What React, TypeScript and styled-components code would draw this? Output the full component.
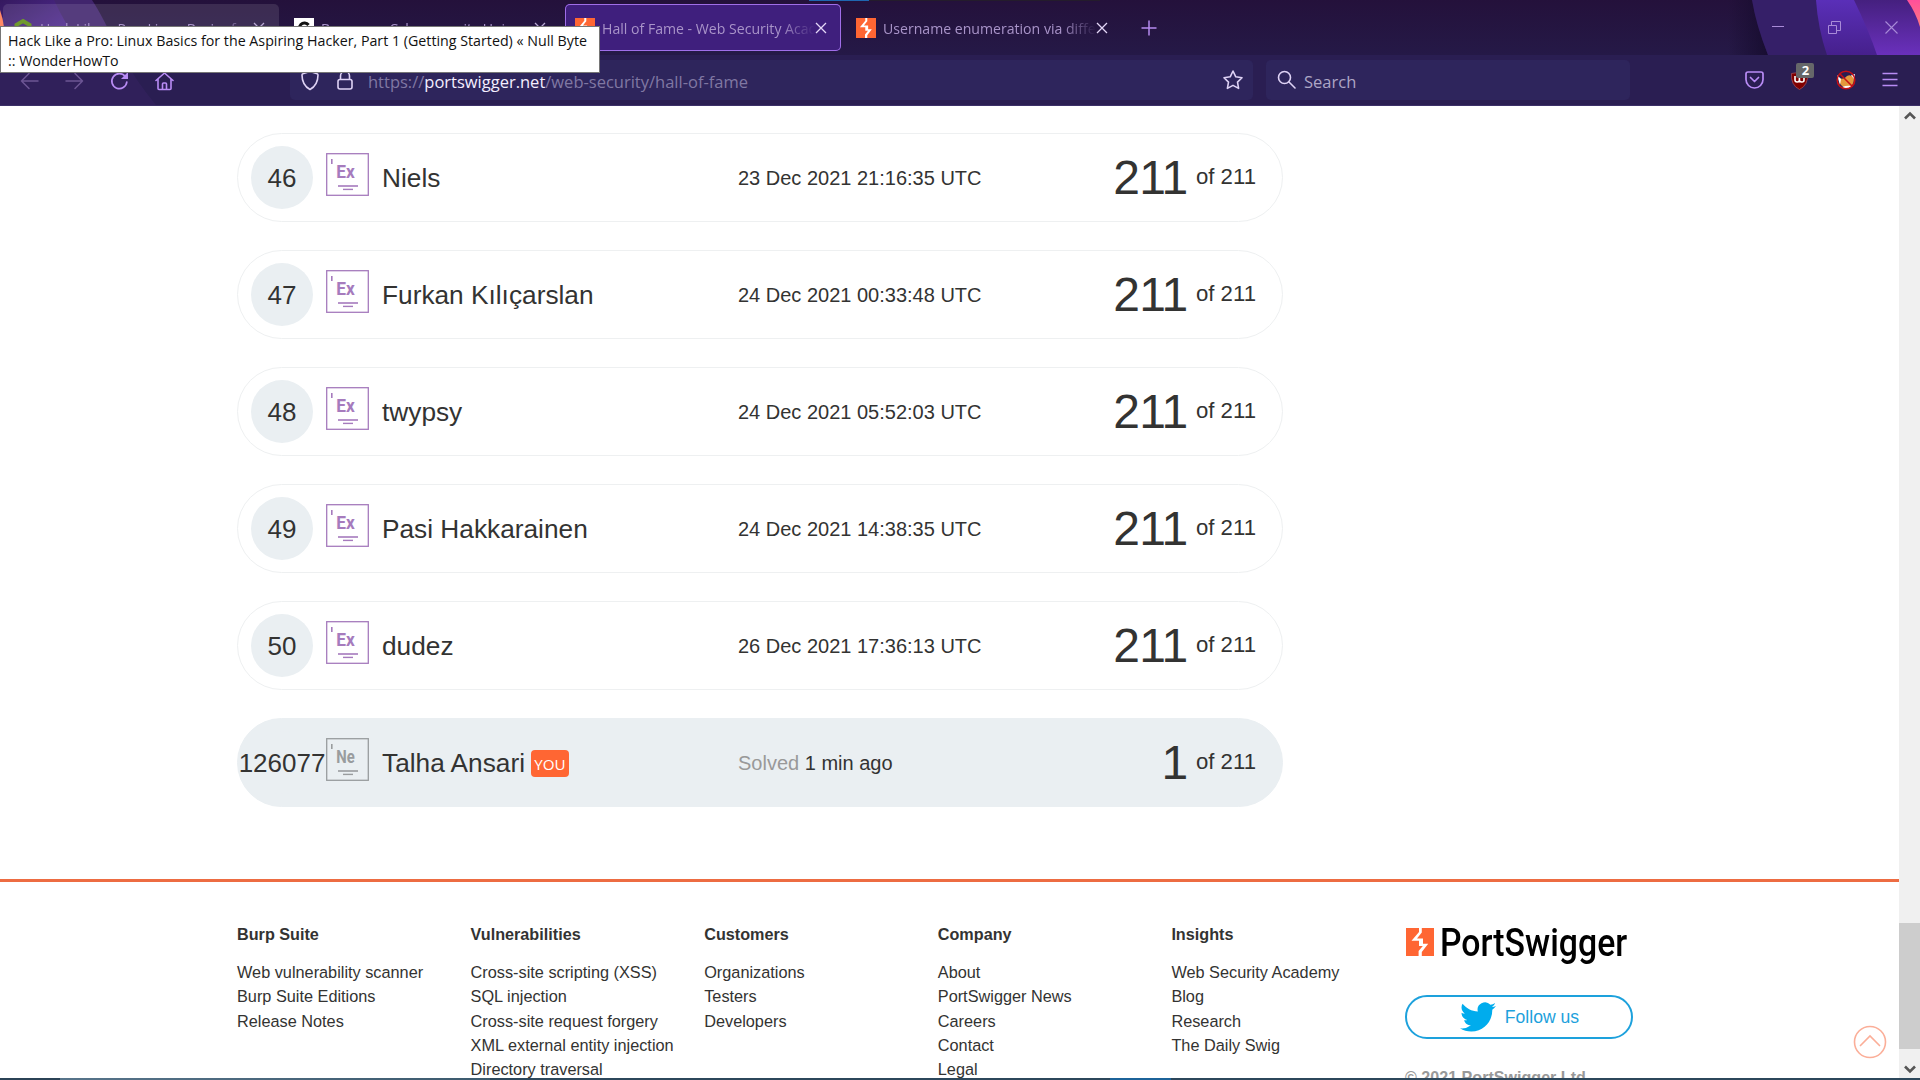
import React from 'react';
import styled, { createGlobalStyle, css } from 'styled-components';

const UI = '"Open Sans", "Noto Sans", sans-serif';
const BODY = '"Liberation Sans", Arial, sans-serif';

const Global = createGlobalStyle`
  * { box-sizing: border-box; }
  body { margin: 0; background: #fff; overflow: hidden; }
`;

const Screen = styled.div`
  position: relative;
  width: 1920px;
  height: 1080px;
  overflow: hidden;
  display: flex;
  flex-direction: column;
  background: #fff;
  font-family: ${BODY};
  color: #333332;
  white-space: nowrap;
`;

/* ---------- Browser chrome ---------- */
const Chrome = styled.header`
  position: relative;
  height: 106px;
  flex: none;
  font-family: ${UI};
  background: linear-gradient(180deg, #24113b 0, #251947 55px, #2a1e52 55px, #2a1e52 105px, #3c3068 105px);
`;

const ThemeArt = styled.svg`
  position: absolute;
  inset: 0;
`;

const ProgressHint = styled.div`
  position: absolute;
  top: 0;
  left: 809px;
  width: 291px;
  height: 1px;
  background: linear-gradient(90deg, #1f66b0 60px, #241c2c 60px);
`;

const TabStrip = styled.div`
  position: relative;
  height: 55px;
  padding: 4px 22px 0 3px;
  display: flex;
  gap: 5px;
`;

const Tab = styled.div<{ $state?: 'hover' | 'active' }>`
  width: 276px;
  height: 47px;
  flex: none;
  display: flex;
  align-items: center;
  padding: 0 14px 0 10px;
  border-radius: 5px;
  color: #a994c9;
  ${(p) => p.$state === 'hover' && css`background: rgba(255, 255, 255, 0.11);`}
  ${(p) => p.$state === 'active' && css`
    background: #3f1f7d;
    box-shadow: inset 0 0 0 1px #a06ee8;
  `}
`;

const TabTitle = styled.span`
  width: 213px;
  margin-left: 7px;
  padding-top: 2px;
  overflow: hidden;
  font-size: 14.1px;
  line-height: 22px;
  mask-image: linear-gradient(90deg, #000 178px, transparent 213px);
`;

const TabClose = styled.svg`
  width: 12px;
  height: 12px;
  margin-left: auto;
  flex: none;
`;

const NewTab = styled.svg`
  width: 16px;
  height: 16px;
  margin: 16px 0 0 14px;
`;

const WindowButtons = styled.div`
  margin-left: auto;
  display: flex;
  height: 46px;
  align-items: center;
  gap: 44px;
`;

const NavBar = styled.div`
  position: relative;
  height: 51px;
  display: flex;
  align-items: center;
  padding: 0 22px 1px 20px;
`;

const NavButtons = styled.div`
  width: 270px;
  padding-top: 2px;
  display: flex;
  align-items: center;
  gap: 26px;
`;

const Field = styled.div<{ $width: number }>`
  width: ${(p) => p.$width}px;
  height: 40px;
  display: flex;
  align-items: center;
  border-radius: 5px;
  background: #2e255c;
  font-size: 16.5px;
`;

const Url = styled.span`
  margin-left: 15px;
  padding-top: 4px;
  line-height: 24px;
  color: #8078a3;
  b { font-weight: 400; color: #f4eeff; }
`;

const Placeholder = styled.span`
  margin-left: 8px;
  padding-top: 3px;
  color: #ada6c5;
`;

const Extensions = styled.div`
  margin-left: auto;
  display: flex;
  align-items: center;
  gap: 26.3px;
`;

const ExtensionSlot = styled.div`
  position: relative;
  display: flex;
`;

const Count = styled.span`
  position: absolute;
  left: 6px;
  top: -7px;
  width: 18px;
  height: 15px;
  border-radius: 2px;
  background: #666769;
  color: #fff;
  font: 700 13px/14px ${UI};
  text-align: center;
`;

const Tooltip = styled.div`
  position: absolute;
  left: 0;
  top: 26px;
  width: 600px;
  height: 47px;
  padding: 4px 7px;
  border: 1px solid #767676;
  background: #fff;
  color: #111;
  font: 14.24px/20px ${UI};
`;

/* ---------- Page ---------- */
const Viewport = styled.div`
  flex: 1;
  min-height: 0;
  display: flex;
`;

const Page = styled.div`
  position: relative;
  width: 1899px;
  overflow: hidden;
`;

const Ranking = styled.main`
  width: 1283px;
  padding: 27px 0 72px 237px;
  display: flex;
  flex-direction: column;
  gap: 28px;
`;

const Entry = styled.div<{ $own?: boolean }>`
  height: 89px;
  display: grid;
  grid-template-columns: 88px 56px 356px 1fr auto;
  align-items: center;
  padding-right: 26px;
  border: 1px solid ${(p) => (p.$own ? '#eaeff2' : '#eef0f1')};
  border-radius: 45px;
  background: ${(p) => (p.$own ? '#eaeff2' : '#fff')};
`;

const Position = styled.div`
  width: 62px;
  height: 63px;
  margin-left: 13px;
  padding-top: 1px;
  display: flex;
  justify-content: center;
  align-items: center;
  border-radius: 50%;
  background: #eaeff2;
  font-size: 26px;
`;

const LevelIcon = styled.svg`
  width: 43px;
  height: 43px;
  margin-bottom: 6px;
`;

const Player = styled.div`
  display: flex;
  align-items: center;
  padding-top: 1px;
  font-size: 26.25px;
`;

const YouTag = styled.span`
  width: 38px;
  height: 27px;
  margin-left: 6px;
  border-radius: 4px;
  background: #ff6633;
  color: #fff;
  font: 15.2px/28px ${UI};
  text-align: center;
`;

const Solved = styled.div`
  padding-top: 1px;
  font-size: 20px;
  span { color: #999; }
`;

const Score = styled.div`
  display: flex;
  align-items: center;
  padding-bottom: 1px;
  font-size: 22.2px;
  strong { font-size: 48px; font-weight: 400; letter-spacing: -0.8px; margin-right: 8.500px; }
`;

const Footer = styled.footer`
  height: 300px;
  padding: 40px 0 0 237px;
  border-top: 3px solid #ed6c42;
  display: grid;
  grid-template-columns: repeat(5, 233.6px) 228px;
`;

const Heading = styled.h3`
  margin: 0 0 14px;
  font-size: 16.2px;
  line-height: 24px;
`;

const LinkText = styled.a`
  display: block;
  font-size: 16.3px;
  line-height: 24.35px;
`;

const Brand = styled.div`
  display: flex;
  align-items: center;
  height: 40px;
  padding-left: 1px;
`;

const BrandName = styled.span`
  margin-left: 6px;
  padding-top: 1px;
  color: #000;
  font: 500 38px/40px Roboto, sans-serif;
  transform: scaleX(0.89);
  transform-origin: left;
`;

const Follow = styled.a`
  margin-top: 33px;
  width: 228px;
  height: 44px;
  display: flex;
  align-items: center;
  justify-content: center;
  gap: 9px;
  padding-left: 1px;
  border: 2px solid #1da1dc;
  border-radius: 22px;
  color: #1da1dc;
  font-size: 17.6px;
`;

const Copyright = styled.p`
  margin: 26px 0 0;
  color: #999;
  font: 700 16.1px/24px ${BODY};
`;

const BackToTop = styled.svg`
  position: absolute;
  right: 12px;
  bottom: 19px;
`;

const Scrollbar = styled.div`
  width: 21px;
  display: flex;
  flex-direction: column;
  align-items: center;
  background: #f0f0f0;
`;

const Thumb = styled.div`
  width: 21px;
  height: 126px;
  margin-top: auto;
  background: #cdcdcd;
`;

const ScrollArrow = styled.svg<{ $down?: boolean }>`
  width: 12px;
  height: 9px;
  flex: none;
  margin: ${(p) => (p.$down ? '16px 0 4px' : '5px 0')};
`;

const Taskbar = styled.div`
  height: 2px;
  flex: none;
  background: linear-gradient(90deg, #2b4356 60px, #57748a 60px, #3c5a6e 490px, #2c475b 490px, #2c475b 1110px, #1c6399 1110px, #1c6399 1171px, #2c475b 1171px);
`;

/* ---------- Icons ---------- */
const SwigMark = styled.svg<{ $size: number }>`
  width: ${(p) => p.$size}px;
  height: ${(p) => p.$size}px;
  flex: none;
`;

const Swig = ({ size }: { size: number }) => (
  <SwigMark $size={size} viewBox="0 0 28 28">
    <path fill="#ff6633" d="M0 0h28v28H0z" />
    <path fill="#fff" d="M13 0h2.800v4.500L11 10.500h6v5.300h5.200L15.800 24v4H12.600v-5l4.200-5H13v-5.200H5.500L13 4z" />
  </SwigMark>
);

const Close = ({ color = '#e4d8f7' }) => (
  <TabClose viewBox="0 0 12 12" stroke={color} strokeWidth="1.3"><path d="M1 1l10 10M11 1L1 11" /></TabClose>
);

const Level = ({ code, color }: { code: string; color: string }) => (
  <LevelIcon viewBox="0 0 43 43" fill={color}>
    <rect x=".7" y=".7" width="41.600" height="41.600" fill="none" stroke={color} strokeWidth="1.3" />
    <rect x="5" y="6" width="1.600" height="5" />
    <text x="10.300" y="25" fontFamily="Roboto, sans-serif" fontWeight="700" fontSize="17.800" textLength="18.500" lengthAdjust="spacingAndGlyphs">{code}</text>
    <rect x="12" y="32.200" width="20" height="1.600" />
    <rect x="17" y="35.700" width="10" height="1.400" />
  </LevelIcon>
);

const Art = () => (
  <ThemeArt width="1920" height="105" viewBox="0 0 1920 105">
    <defs>
      <linearGradient id="shade"><stop offset="0" stopColor="#150b2c" stopOpacity="0" /><stop offset="1" stopColor="#150b2c" stopOpacity=".8" /></linearGradient>
      <linearGradient id="mid" x2="0" y2="1"><stop offset="0" stopColor="#5a2fb8" /><stop offset="1" stopColor="#46208c" /></linearGradient>
      <linearGradient id="right" x2="0" y2="1"><stop offset="0" stopColor="#45207f" /><stop offset="1" stopColor="#6a30bc" /></linearGradient>
      <linearGradient id="pink" x2="0" y2="1"><stop offset="0" stopColor="#ff4f9a" /><stop offset="1" stopColor="#ff7a80" /></linearGradient>
      <linearGradient id="left" x1="0" y1="0" x2="1" y2="1"><stop offset="0" stopColor="#35195f" /><stop offset="1" stopColor="#5f35ad" /></linearGradient>
    </defs>
    <path fill="#41256d" d="M50 0h42q12 18 28 55H60z" />
    <path fill="url(#left)" d="M0 0h54q12 26 32 55H0z" />
    <path fill="#ff8a66" d="M0 10q3 8 4 18H0z" />
    <path fill="#3b2569" opacity=".35" d="M0 55h122q14 26 34 50H0z" />
    <path fill="url(#shade)" d="M1728 0h24q6 28 16 55h-40z" />
    <path fill="#351f68" d="M1752 0h168v55h-152q-12-30-16-55z" />
    <path fill="url(#mid)" d="M1816 0h104v55h-93q-9-26-11-55z" />
    <path fill="url(#right)" d="M1854 0h66v55h-43q-8-24-23-55z" />
    <path fill="url(#pink)" d="M1907 0h13v27q-4-14-13-27z" />
  </ThemeArt>
);

const people: [string, string, string][] = [
  ['46', 'Niels', '23 Dec 2021 21:16:35 UTC'],
  ['47', 'Furkan Kılıçarslan', '24 Dec 2021 00:33:48 UTC'],
  ['48', 'twypsy', '24 Dec 2021 05:52:03 UTC'],
  ['49', 'Pasi Hakkarainen', '24 Dec 2021 14:38:35 UTC'],
  ['50', 'dudez', '26 Dec 2021 17:36:13 UTC'],
];

const columns: [string, string[]][] = [
  ['Burp Suite', ['Web vulnerability scanner', 'Burp Suite Editions', 'Release Notes']],
  ['Vulnerabilities', ['Cross-site scripting (XSS)', 'SQL injection', 'Cross-site request forgery', 'XML external entity injection', 'Directory traversal']],
  ['Customers', ['Organizations', 'Testers', 'Developers']],
  ['Company', ['About', 'PortSwigger News', 'Careers', 'Contact', 'Legal']],
  ['Insights', ['Web Security Academy', 'Blog', 'Research', 'The Daily Swig']],
];

export default function App() {
  return (
    <Screen>
      <Global />
      <Chrome>
        <Art />
        <ProgressHint />
        <TabStrip>
          <Tab $state="hover">
            <svg width="20" height="20" viewBox="0 0 20 20" fill="none" stroke="#6f9a2d" strokeWidth="4"><path d="M10 3l6.500 3.800v6.400L10 17l-6.500-3.800V6.800z" /></svg>
            <TabTitle>Hack Like a Pro: Linux Basics for the</TabTitle>
            <Close color="#b9a9d3" />
          </Tab>
          <Tab>
            <svg width="20" height="20" viewBox="0 0 20 20"><path fill="#fff" d="M0 0h20v20H0z" /><path d="M14.500 7A5 5 0 1 0 15 12h-4" fill="none" stroke="#111" strokeWidth="3" /></svg>
            <TabTitle>Become a Cybersecurity Universe</TabTitle>
            <Close color="#b9a9d3" />
          </Tab>
          <Tab $state="active"><Swig size={20} /><TabTitle>Hall of Fame - Web Security Academy</TabTitle><Close /></Tab>
          <Tab><Swig size={20} /><TabTitle>Username enumeration via different</TabTitle><Close /></Tab>
          <NewTab viewBox="0 0 16 16" stroke="#b58af0" strokeWidth="1.5"><path d="M8 .5v15M.5 8h15" /></NewTab>
          <WindowButtons>
            <svg width="12" height="14" stroke="#a98bd8"><path d="M0 6.500h12" /></svg>
            <svg width="13" height="13" fill="none" stroke="#a98bd8"><path d="M.5 4.500h8v8h-8zM3.500 4.500v-4h9v9h-4" /></svg>
            <svg width="13" height="13" stroke="#a98bd8" strokeWidth="1.100"><path d="M.5.5l12 12M12.500.5l-12 12" /></svg>
          </WindowButtons>
        </TabStrip>
        <NavBar>
          <NavButtons>
            <svg width="19" height="20" fill="none" stroke="#6c5594" strokeWidth="1.500" strokeLinecap="round" strokeLinejoin="round"><path d="M18 10H1.500M9 2.500L1.500 10 9 17.500" /></svg>
            <svg width="19" height="20" fill="none" stroke="#6c5594" strokeWidth="1.500" strokeLinecap="round" strokeLinejoin="round"><path d="M1 10h16.500M10 2.500l7.500 7.500-7.500 7.500" /></svg>
            <svg width="19" height="20" fill="none" stroke="#b98cf5" strokeWidth="1.700" strokeLinecap="round"><path d="M15.200 5.500A7.500 7.500 0 1 0 16.800 11" /><path fill="#b98cf5" stroke="none" d="M18 1v7h-7z" /></svg>
            <svg width="19" height="20" fill="none" stroke="#b98cf5" strokeWidth="1.600" strokeLinecap="round" strokeLinejoin="round"><path d="M1 9.500L9.500 2 18 9.500M3 8v9.500q0 1 1 1h11q1 0 1-1V8M7.500 18v-5q0-1 1-1h2q1 0 1 1v5" /></svg>
          </NavButtons>
          <Field $width={963}>
            <svg width="18" height="20" viewBox="0 0 18 20" fill="none" stroke="#ded2f5" strokeWidth="1.600" strokeLinejoin="round" overflow="visible"><path transform="translate(11 .5)" d="M9 1l7.200 2.200q.8.200.8 1.200 0 10-8 14.600Q1 14.400 1 4.400q0-1 .8-1.200z" /></svg>
            <svg width="45" height="20" viewBox="0 0 45 20" fill="none" stroke="#ded2f5" strokeWidth="1.600"><rect x="30" y="9.500" width="14" height="9.500" rx="2" /><path d="M32.500 9.500V6a4.500 4.500 0 0 1 9 0v3.500" /></svg>
            <Url>https://<b>portswigger.net</b>/web-security/hall-of-fame</Url>
            <svg width="504" height="22" viewBox="0 0 504 22" fill="none" stroke="#ded2f5" strokeWidth="1.600" strokeLinejoin="round"><path transform="translate(475 1)" d="M10 1l2.800 5.800 6.200.9-4.500 4.400 1.100 6.300L10 15.400l-5.600 3 1.100-6.300L1 7.700l6.200-.9z" /></svg>
          </Field>
          <svg width="13" height="1" />
          <Field $width={364}>
            <svg width="30" height="20" viewBox="0 0 30 20" fill="none" stroke="#ded2f5" strokeWidth="1.600" strokeLinecap="round"><circle cx="18.500" cy="7.500" r="6" /><path d="M23 12l6 6" /></svg>
            <Placeholder>Search</Placeholder>
          </Field>
          <Extensions>
            <svg width="19" height="18" fill="none" stroke="#b98cf5" strokeWidth="1.700" strokeLinecap="round" strokeLinejoin="round"><path d="M3 1h13q2 0 2 2v5.500a8.500 8.500 0 0 1-17 0V3q0-2 2-2zM5.500 6.500l4 4 4-4" /></svg>
            <ExtensionSlot>
              <svg width="19" height="20"><path fill="#800000" stroke="#a64a50" strokeWidth=".8" d="M9.500 1q3.500 2.500 8 2.500 1 11.500-8 16-9-4.500-8-16 4.500 0 8-2.500z" /><path fill="none" stroke="#fff" strokeWidth="1.600" d="M5 6v4q0 2 2.200 2t2.200-2V7v3q0 2 2.400 2t2.200-2V6" /></svg>
              <Count>2</Count>
            </ExtensionSlot>
            <svg width="20" height="20"><path fill="#e39a3c" d="M3 8q5 2 8-2 4-2 7 2 0 9-7 10-8-1-8-10z" /><path fill="#fff" d="M1 5l4 4-1 6zM15 5l4-1-1 5zM6 17q5-2 10-1l-5 3z" /><circle cx="10" cy="10" r="8.800" fill="none" stroke="#c80f14" strokeWidth="1.500" /><path stroke="#c80f14" strokeWidth="1.500" d="M4 4l12 12" /></svg>
            <svg width="16" height="16" stroke="#b98cf5" strokeWidth="1.600"><path d="M.5 1.500h15M.5 7.500h15M.5 13.500h15" /></svg>
          </Extensions>
        </NavBar>
        <Tooltip>
          Hack Like a Pro: Linux Basics for the Aspiring Hacker, Part 1 (Getting Started) « Null Byte<br />:: WonderHowTo
        </Tooltip>
      </Chrome>

      <Viewport>
        <Page>
          <Ranking>
            {people.map(([rank, name, when]) => (
              <Entry key={rank}>
                <Position>{rank}</Position>
                <Level code="Ex" color="#a67bbd" />
                <Player>{name}</Player>
                <Solved>{when}</Solved>
                <Score><strong>211</strong>of 211</Score>
              </Entry>
            ))}
            <Entry $own>
              <Position>126077</Position>
              <Level code="Ne" color="#999c9e" />
              <Player>Talha Ansari<YouTag>YOU</YouTag></Player>
              <Solved><span>Solved</span> 1 min ago</Solved>
              <Score><strong>1</strong>of 211</Score>
            </Entry>
          </Ranking>
          <Footer>
            {columns.map(([title, links]) => (
              <nav key={title}>
                <Heading>{title}</Heading>
                {links.map((l) => <LinkText key={l}>{l}</LinkText>)}
              </nav>
            ))}
            <div>
              <Brand><Swig size={28} /><BrandName>PortSwigger</BrandName></Brand>
              <Follow>
                <svg width="36" height="30" viewBox="0 0 24 20" preserveAspectRatio="none" fill="#00aced"><path d="M24 2.600c-.9.400-1.800.6-2.800.8 1-.6 1.800-1.600 2.200-2.700-1 .6-2 1-3.100 1.200A4.900 4.900 0 0 0 11.900 6.400C7.700 6.200 4.100 4.200 1.700 1.200c-1.300 2.200-.7 5 1.500 6.500-.8 0-1.600-.2-2.200-.6 0 2.300 1.600 4.400 3.900 4.900-.7.200-1.500.2-2.200.1.600 2 2.400 3.400 4.600 3.400A9.900 9.900 0 0 1 0 17.500 14 14 0 0 0 7.500 19.700c9.100 0 14.300-7.700 14-14.600 1-.7 1.800-1.600 2.500-2.500z" /></svg>
                Follow us
              </Follow>
              <Copyright>© 2021 PortSwigger Ltd.</Copyright>
            </div>
          </Footer>
          <BackToTop width="34" height="34" fill="none" stroke="#fbae98" strokeWidth="1.600"><circle cx="17" cy="17" r="15.500" /><path d="M7 21l10-10 10 10" /></BackToTop>
        </Page>
        <Scrollbar>
          <ScrollArrow viewBox="0 0 12 9" fill="none" stroke="#555" strokeWidth="2.600"><path d="M1 7.500l5-5 5 5" /></ScrollArrow>
          <Thumb />
          <ScrollArrow $down viewBox="0 0 12 9" fill="none" stroke="#555" strokeWidth="2.600"><path d="M1 1.500l5 5 5-5" /></ScrollArrow>
        </Scrollbar>
      </Viewport>
      <Taskbar />
    </Screen>
  );
}
